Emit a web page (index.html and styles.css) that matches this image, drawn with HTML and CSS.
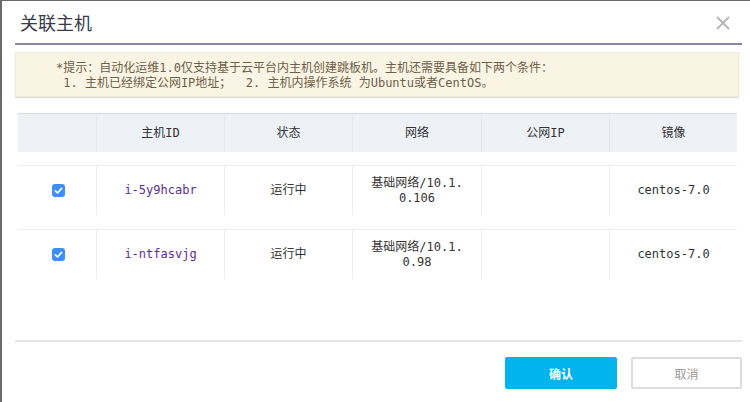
FILE: index.html
```html
<!DOCTYPE html>
<html lang="zh-CN">
<head>
<meta charset="utf-8">
<title>关联主机</title>
<link rel="stylesheet" href="styles.css">
</head>
<body>
<div class="dialog">
  <div class="dialog-header">
    <h1 class="dialog-title">关联主机</h1>
    <span class="close" aria-label="关闭">
      <svg width="14" height="14" viewBox="0 0 14 14"><path d="M1 1 L13 13 M13 1 L1 13" stroke="#b5b5b5" stroke-width="1.8" fill="none"/></svg>
    </span>
  </div>
  <div class="notice">
    <p class="notice-line">*提示：自动化运维1.0仅支持基于云平台内主机创建跳板机。主机还需要具备如下两个条件：</p>
    <p class="notice-line"> 1. 主机已经绑定公网IP地址；  2. 主机内操作系统 为Ubuntu或者CentOS。</p>
  </div>
  <div class="grid">
    <div class="grid-row grid-head">
      <div class="cell"></div>
      <div class="cell">主机ID</div>
      <div class="cell">状态</div>
      <div class="cell">网络</div>
      <div class="cell">公网IP</div>
      <div class="cell">镜像</div>
    </div>
    <div class="grid-row grid-body">
      <div class="cell"><span class="check"><svg width="13" height="13" viewBox="0 0 13 13"><path d="M3.4 6.8 L5.6 9 L9.6 4.4" stroke="#fff" stroke-width="1.7" fill="none" stroke-linecap="round" stroke-linejoin="round"/></svg></span></div>
      <div class="cell id">i-5y9hcabr</div>
      <div class="cell">运行中</div>
      <div class="cell">基础网络/10.1.<br>0.106</div>
      <div class="cell"></div>
      <div class="cell">centos-7.0</div>
    </div>
    <div class="grid-row grid-body">
      <div class="cell"><span class="check"><svg width="13" height="13" viewBox="0 0 13 13"><path d="M3.4 6.8 L5.6 9 L9.6 4.4" stroke="#fff" stroke-width="1.7" fill="none" stroke-linecap="round" stroke-linejoin="round"/></svg></span></div>
      <div class="cell id">i-ntfasvjg</div>
      <div class="cell">运行中</div>
      <div class="cell">基础网络/10.1.<br>0.98</div>
      <div class="cell"></div>
      <div class="cell">centos-7.0</div>
    </div>
  </div>
  <div class="footer">
    <button class="btn btn-primary">确认</button>
    <button class="btn btn-default">取消</button>
  </div>
</div>
</body>
</html>
```
FILE: styles.css
```css
html, body {
  margin: 0;
  padding: 0;
  background: #fff;
}
body {
  font-family: "DejaVu Sans Mono", "Noto Sans CJK SC", monospace;
  font-size: 12px;
  color: #333;
}
.dialog {
  box-sizing: border-box;
  width: 750px;
  height: 402px;
  border-left: 2px solid #6a6a6a;
  border-top: 1px solid #6a6a6a;
  padding: 0 8px 0 13px;
  display: flex;
  flex-direction: column;
  overflow: hidden;
}
.dialog-header {
  height: 42px;
  border-bottom: 2px solid #8b879d;
  display: flex;
  align-items: center;
  justify-content: space-between;
}
.dialog-title {
  margin: 0 0 0 5px;
  font-family: "Noto Sans CJK SC", sans-serif;
  font-size: 18px;
  font-weight: normal;
  color: #3a3a48;
  line-height: 42px;
}
.close {
  display: flex;
  margin-right: 12px;
  margin-top: 2px;
}
.notice {
  margin: 7px 3px 0 0;
  height: 45px;
  box-sizing: border-box;
  background: #f9f4e4;
  border: 1px solid #f1ead4;
  box-shadow: 0 1px 1px rgba(0, 0, 0, 0.12);
  padding: 8px 0 0 40px;
  color: #6e5f48;
}
.notice-line {
  margin: 0;
  line-height: 15px;
  white-space: pre;
}
.grid {
  margin: 16px 5px 0 3px;
}
.grid-row {
  display: grid;
  grid-template-columns: 78px 128px 128px 129px 128px 128px;
}
.grid-head {
  height: 39px;
  box-sizing: border-box;
  border-top: 1px solid #dadada;
  background: #eef2f7;
}
.grid-head .cell + .cell {
  border-left: 1px solid #e4e7ec;
}
.grid-body {
  height: 50px;
  box-sizing: border-box;
  border-top: 1px solid #ececec;
  margin-top: 13px;
}
.grid-body + .grid-body {
  margin-top: 14px;
}
.grid-body .cell + .cell {
  border-left: 1px solid #ededed;
}
.cell {
  display: flex;
  align-items: center;
  justify-content: center;
  text-align: center;
  line-height: 15px;
}
.id {
  color: #5c2d91;
}
.check {
  display: flex;
  width: 13px;
  height: 13px;
  background: #3c8ff4;
  border-radius: 3px;
  margin-left: 2px;
}
.footer {
  margin-top: auto;
  margin-bottom: 13px;
  border-top: 2px solid #e6e6e6;
  padding-top: 15px;
  display: flex;
  justify-content: flex-end;
  gap: 14px;
}
.btn {
  box-sizing: border-box;
  height: 32px;
  border-radius: 2px;
  font-family: "Noto Sans CJK SC", sans-serif;
  font-size: 12px;
  cursor: pointer;
}
.btn-primary {
  width: 112px;
  border: none;
  background: #00b4ec;
  color: #fff;
  font-weight: bold;
}
.btn-default {
  width: 111px;
  border: 2px solid #dcdcdc;
  background: #fff;
  color: #999;
}
```
